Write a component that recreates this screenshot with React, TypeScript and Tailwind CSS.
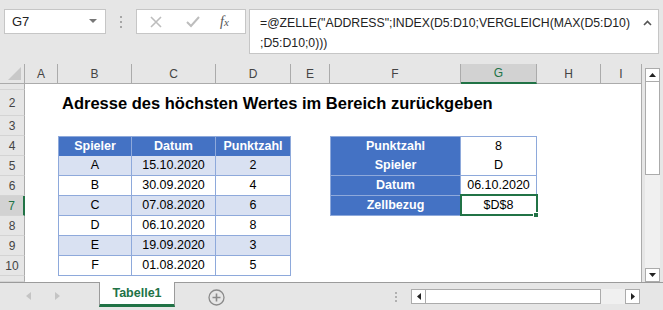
import React from 'react'

const COLS = ['', 'A', 'B', 'C', 'D', 'E', 'F', 'G', 'H', 'I']

const ROWS = [
  { label: '', h: 'h-[6px]' },
  { label: '2', h: 'h-[26px]' },
  { label: '3', h: 'h-[20px]' },
  { label: '4', h: 'h-[20px]' },
  { label: '5', h: 'h-[20px]' },
  { label: '6', h: 'h-[20px]' },
  { label: '7', h: 'h-[20px]' },
  { label: '8', h: 'h-[20px]' },
  { label: '9', h: 'h-[20px]' },
  { label: '10', h: 'h-[20px]' },
  { label: '', h: 'h-[6px]' },
]

const table1 = [
  ['Spieler', 'Datum', 'Punktzahl'],
  ['A', '15.10.2020', '2'],
  ['B', '30.09.2020', '4'],
  ['C', '07.08.2020', '6'],
  ['D', '06.10.2020', '8'],
  ['E', '19.09.2020', '3'],
  ['F', '01.08.2020', '5'],
]

const table2 = [
  ['Punktzahl', '8'],
  ['Spieler', 'D'],
  ['Datum', '06.10.2020'],
  ['Zellbezug', '$D$8'],
]

// row index r is 0-based from excel row 1, column c: 0 = row header, 1 = A ...
function SheetCell({ r, c }: { r: number; c: number }) {
  const row = r + 1

  if (row === 2 && c === 2) {
    return (
      <div className="flex items-center whitespace-nowrap pl-[4px] pt-[1px] text-[16.5px] font-bold text-black">
        Adresse des höchsten Wertes im Bereich zurückgeben
      </div>
    )
  }

  // first table B4:D10
  if (row >= 4 && row <= 10 && c >= 2 && c <= 4) {
    const text = table1[row - 4][c - 2]
    const header = row === 4
    const band = row % 2 === 1
    return (
      <div
        className={`flex items-center justify-center border-b border-r border-[#8ea9db] text-[12.5px] ${
          header ? 'border-t bg-[#4472c4] font-bold text-white' : band ? 'bg-[#d9e1f2] text-black' : 'bg-white text-black'
        } ${c === 2 ? 'border-l' : ''}`}
      >
        {text}
      </div>
    )
  }

  // second table F4:G7
  if (row >= 4 && row <= 7 && (c === 6 || c === 7)) {
    const text = table2[row - 4][c - 6]
    const label = c === 6
    return (
      <div
        className={`relative flex items-center justify-center border-b border-r border-[#8ea9db] text-[12.5px] ${
          label ? 'border-l bg-[#4472c4] font-bold text-white' : 'bg-white text-black'
        } ${row === 4 ? 'border-t' : ''}`}
      >
        {text}
        {row === 7 && !label && (
          <>
            <div className="absolute -top-[2px] -left-[1px] -right-[2px] -bottom-[1px] border-2 border-[#217346]" />
            <div className="absolute -right-[3px] -bottom-[3px] h-[6px] w-[6px] border border-white bg-[#217346]" />
          </>
        )}
      </div>
    )
  }

  return <div />
}

function RowHeader({ label, selected }: { label: string; selected: boolean }) {
  return (
    <div
      className={`flex items-center justify-center border-b border-[#d4d4d4] text-[12px] ${
        selected ? 'border-r-2 border-r-[#217346] bg-[#d2d2d2] text-[#217346]' : 'border-r border-r-[#ababab] bg-[#e6e6e6] text-[#444]'
      }`}
    >
      {label}
    </div>
  )
}

function FormulaBar() {
  return (
    <div className="flex h-[64px] items-start pt-[9px]">
      {/* name box */}
      <div className="ml-[4px] flex h-[25px] w-[102px] items-center justify-between border border-[#c6c6c6] bg-white pl-[7px] pr-[8px] text-[13px] text-[#222]">
        <span>G7</span>
        <svg width="8" height="5" viewBox="0 0 8 5">
          <path d="M0 0 L8 0 L4 4 Z" fill="#777" />
        </svg>
      </div>
      <div className="flex h-[25px] w-[30px] flex-col items-center justify-center gap-[3px]">
        <span className="h-[2px] w-[2px] bg-[#a6a6a6]" />
        <span className="h-[2px] w-[2px] bg-[#a6a6a6]" />
        <span className="h-[2px] w-[2px] bg-[#a6a6a6]" />
      </div>
      {/* cancel / enter / fx */}
      <div className="flex h-[25px] w-[110px] items-center border border-[#c6c6c6] bg-white pl-[13px]">
        <svg width="12" height="12" viewBox="0 0 12 12" className="mr-[24px]">
          <path d="M1 1 L11 11 M11 1 L1 11" stroke="#bdbdbd" strokeWidth="1.6" />
        </svg>
        <svg width="14" height="12" viewBox="0 0 14 12" className="mr-[20px]">
          <path d="M1 6 L5 10 L13 1" stroke="#bdbdbd" strokeWidth="2" fill="none" />
        </svg>
        <span className="font-['Liberation_Serif',serif] text-[14px] italic text-[#555]">
          f<span className="text-[11px]">x</span>
        </span>
      </div>
      {/* formula */}
      <div className="ml-[3px] flex h-[45px] w-[410px] items-start justify-between border border-[#c6c6c6] bg-white pl-[10px] pr-[6px] pt-[3px] text-[12.25px] leading-[20px] text-[#222]">
        <div>
          <div>=@ZELLE(&quot;ADDRESS&quot;;INDEX(D5:D10;VERGLEICH(MAX(D5:D10)</div>
          <div>;D5:D10;0)))</div>
        </div>
        <svg width="9" height="6" viewBox="0 0 9 6" className="mt-[7px]">
          <path d="M1 5 L4.5 1.5 L8 5" stroke="#555" strokeWidth="1.6" fill="none" />
        </svg>
      </div>
    </div>
  )
}

function VScroll() {
  return (
    <div className="ml-[3px] mt-[4px] flex w-[15px] flex-col">
      <div className="flex h-[14px] items-center justify-center border border-[#ababab] bg-white">
        <svg width="7" height="4" viewBox="0 0 7 4">
          <path d="M0 4 L3.5 0 L7 4 Z" fill="#222" />
        </svg>
      </div>
      <div className="h-[93px] border border-t-0 border-[#ababab] bg-white" />
      <div className="h-[93px] bg-[#f0f0f0]" />
      <div className="flex h-[14px] items-center justify-center border border-[#ababab] bg-white">
        <svg width="7" height="4" viewBox="0 0 7 4">
          <path d="M0 0 L7 0 L3.5 4 Z" fill="#222" />
        </svg>
      </div>
    </div>
  )
}

function TabBar() {
  return (
    <div className="flex h-[28px] items-start border-t border-[#9b9b9b]">
      <div className="flex h-[26px] w-[99px] items-center pl-[26px]">
        <svg width="5" height="8" viewBox="0 0 5 8" className="mr-[24px]">
          <path d="M5 0 L0 4 L5 8 Z" fill="#c4c4c4" />
        </svg>
        <svg width="5" height="8" viewBox="0 0 5 8">
          <path d="M0 0 L5 4 L0 8 Z" fill="#c4c4c4" />
        </svg>
      </div>
      <div className="-mt-[1px] flex h-[25px] w-[76px] items-center justify-center border-x border-[#9b9b9b] border-b-[3px] border-b-[#217346] bg-white pt-[1px] text-[12.5px] font-bold text-[#217346]">
        Tabelle1
      </div>
      <div className="ml-[33px] mt-[6px]">
        <svg width="17" height="17" viewBox="0 0 17 17">
          <circle cx="8.5" cy="8.5" r="7.5" fill="none" stroke="#8a8a8a" strokeWidth="1.3" />
          <path d="M8.5 4.5 V12.5 M4.5 8.5 H12.5" stroke="#8a8a8a" strokeWidth="1.6" />
        </svg>
      </div>
      <div className="ml-[170px] mt-[9px] flex flex-col gap-[2px]">
        <span className="h-[2px] w-[2px] bg-[#b0b0b0]" />
        <span className="h-[2px] w-[2px] bg-[#b0b0b0]" />
        <span className="h-[2px] w-[2px] bg-[#b0b0b0]" />
      </div>
      {/* horizontal scroll */}
      <div className="ml-[14px] mt-[6px] flex h-[15px]">
        <div className="flex w-[15px] items-center justify-center border border-[#ababab] bg-white">
          <svg width="4" height="7" viewBox="0 0 4 7">
            <path d="M4 0 L0 3.5 L4 7 Z" fill="#222" />
          </svg>
        </div>
        <div className="w-[175px] border border-l-0 border-[#ababab] bg-white" />
        <div className="w-[24px] bg-[#f0f0f0]" />
        <div className="flex w-[15px] items-center justify-center border border-[#ababab] bg-white">
          <svg width="4" height="7" viewBox="0 0 4 7">
            <path d="M0 0 L4 3.5 L0 7 Z" fill="#222" />
          </svg>
        </div>
      </div>
    </div>
  )
}

export default function App() {
  return (
    <div className="h-[310px] w-[663px] overflow-hidden bg-[#e6e6e6] font-['Liberation_Sans',Arial,sans-serif]">
      <FormulaBar />
      <div className="flex">
        <div className="grid w-[642px] grid-cols-[25px_33px_74px_84px_75px_39px_131px_76px_64px_41px] border-r border-[#ababab] bg-white">
          {/* column headers */}
          {COLS.map((col, c) =>
            c === 0 ? (
              <div key="corner" className="relative h-[20px] border-b border-r border-[#ababab] bg-[#e6e6e6]">
                <svg width="13" height="13" viewBox="0 0 13 13" className="absolute bottom-[3px] right-[3px]">
                  <path d="M13 0 L13 13 L0 13 Z" fill="#c8c8c8" />
                </svg>
              </div>
            ) : (
              <div
                key={col}
                className={`flex h-[20px] items-center justify-center border-r border-[#ababab] text-[12px] ${
                  col === 'G'
                    ? 'border-b-2 border-b-[#217346] bg-[#d2d2d2] text-[#217346]'
                    : 'border-b border-b-[#ababab] bg-[#e6e6e6] text-[#444]'
                }`}
              >
                {col}
              </div>
            ),
          )}
          {ROWS.map((row, r) => (
            <React.Fragment key={r}>
              <div className={row.h + ' flex'}>
                <div className="flex-1 grid">
                  <RowHeader label={row.label} selected={row.label === '7'} />
                </div>
              </div>
              {COLS.slice(1).map((_, i) => (
                <div key={i} className={row.h + ' grid'}>
                  <SheetCell r={r} c={i + 1} />
                </div>
              ))}
            </React.Fragment>
          ))}
        </div>
        <VScroll />
      </div>
      <TabBar />
    </div>
  )
}
